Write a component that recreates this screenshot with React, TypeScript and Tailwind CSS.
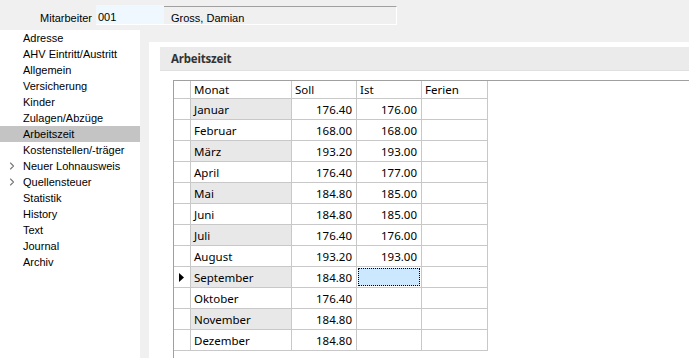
import { ChevronRight } from 'lucide-react';

const menu = [
  'Adresse',
  'AHV Eintritt/Austritt',
  'Allgemein',
  'Versicherung',
  'Kinder',
  'Zulagen/Abzüge',
  'Arbeitszeit',
  'Kostenstellen/-träger',
  'Neuer Lohnausweis',
  'Quellensteuer',
  'Statistik',
  'History',
  'Text',
  'Journal',
  'Archiv',
];

const expandable = ['Neuer Lohnausweis', 'Quellensteuer'];

const rows = [
  { monat: 'Januar', soll: '176.40', ist: '176.00' },
  { monat: 'Februar', soll: '168.00', ist: '168.00' },
  { monat: 'März', soll: '193.20', ist: '193.00' },
  { monat: 'April', soll: '176.40', ist: '177.00' },
  { monat: 'Mai', soll: '184.80', ist: '185.00' },
  { monat: 'Juni', soll: '184.80', ist: '185.00' },
  { monat: 'Juli', soll: '176.40', ist: '176.00' },
  { monat: 'August', soll: '193.20', ist: '193.00' },
  { monat: 'September', soll: '184.80', ist: '' },
  { monat: 'Oktober', soll: '176.40', ist: '' },
  { monat: 'November', soll: '184.80', ist: '' },
  { monat: 'Dezember', soll: '184.80', ist: '' },
];

const cell = 'box-border border-r border-b border-[#c8c8c8] shrink-0';

export default function App() {
  return (
    <div className="w-[689px] h-[358px] overflow-hidden bg-[#f0f0f0] flex flex-col font-['Liberation_Sans',Arial,sans-serif] text-[11px] text-black">
      {/* Header */}
      <div className="h-[30px] flex items-start shrink-0">
        <div className="w-[92px] pt-[10px] text-right">Mitarbeiter</div>
        <div className="ml-[4px] mt-[5px] w-[68px] h-[20px] bg-[#f0f8ff] border-b border-white pl-[2px] pt-[4px]">001</div>
        <div className="mt-[6px] w-[233px] h-[19px] border-t border-[#a0a0a0] border-r border-b border-r-white border-b-white pl-[7px] pt-[3px]">
          Gross, Damian
        </div>
      </div>

      <div className="flex flex-1 min-h-0">
        {/* Sidebar */}
        <div className="w-[140px] bg-white shrink-0 flex flex-col">
          {menu.map((item) => (
            <div
              key={item}
              className={`h-[16px] flex items-center relative pl-[23px] pt-px ${item === 'Arbeitszeit' ? 'bg-[#c4c4c4]' : ''}`}
            >
              {expandable.includes(item) && (
                <ChevronRight className="absolute left-[6px] top-[2px] w-[12px] h-[12px] text-[#777]" strokeWidth={2.2} />
              )}
              {item}
            </div>
          ))}
        </div>

        {/* Content */}
        <div className="flex-1 pl-[9px] pt-[12px] flex flex-col min-w-0">
          <div className="flex-1 bg-white pl-[11px] pt-[5px] flex flex-col font-['Noto_Sans',sans-serif] text-[11.5px]">
            <div className="h-[24px] bg-[#ebebeb] border-b border-[#e0e0e0] pl-[11px] flex items-center font-bold text-[#333] tracking-[-0.2px]">
              Arbeitszeit
            </div>
            <div className="flex-1 mt-[9px] ml-[13px] border-l border-t border-[#a0a0a0] flex flex-col">
              <div className="flex h-[18px]">
                <div className={`${cell} w-[17px]`} />
                <div className={`${cell} w-[101px] pl-[3px] leading-[18px]`}>Monat</div>
                <div className={`${cell} w-[65px] pl-[3px] leading-[18px]`}>Soll</div>
                <div className={`${cell} w-[65px] pl-[3px] leading-[18px]`}>Ist</div>
                <div className={`${cell} w-[66px] pl-[3px] leading-[18px]`}>Ferien</div>
              </div>
              {rows.map((r, i) => {
                const current = r.monat === 'September';
                return (
                  <div key={r.monat} className="flex h-[21px]">
                    <div className={`${cell} w-[17px] flex items-center justify-center`}>
                      {current && (
                        <svg width="6" height="9" viewBox="0 0 6 9">
                          <path d="M0 0 L5 4.5 L0 9 Z" fill="#000" />
                        </svg>
                      )}
                    </div>
                    <div className={`${cell} w-[101px] pl-[3px] leading-[22px] ${i % 2 === 0 ? 'bg-[#e8e8e8]' : ''}`}>
                      {r.monat}
                    </div>
                    <div className={`${cell} w-[65px] pr-[4px] text-right leading-[22px]`}>{r.soll}</div>
                    {current ? (
                      <div className={`${cell} w-[65px] p-px`}>
                        <div className="h-full bg-[#cce8ff] border border-dotted border-black" />
                      </div>
                    ) : (
                      <div className={`${cell} w-[65px] pr-[4px] text-right leading-[22px]`}>{r.ist}</div>
                    )}
                    <div className={`${cell} w-[66px]`} />
                  </div>
                );
              })}
            </div>
          </div>
        </div>
      </div>
    </div>
  );
}
